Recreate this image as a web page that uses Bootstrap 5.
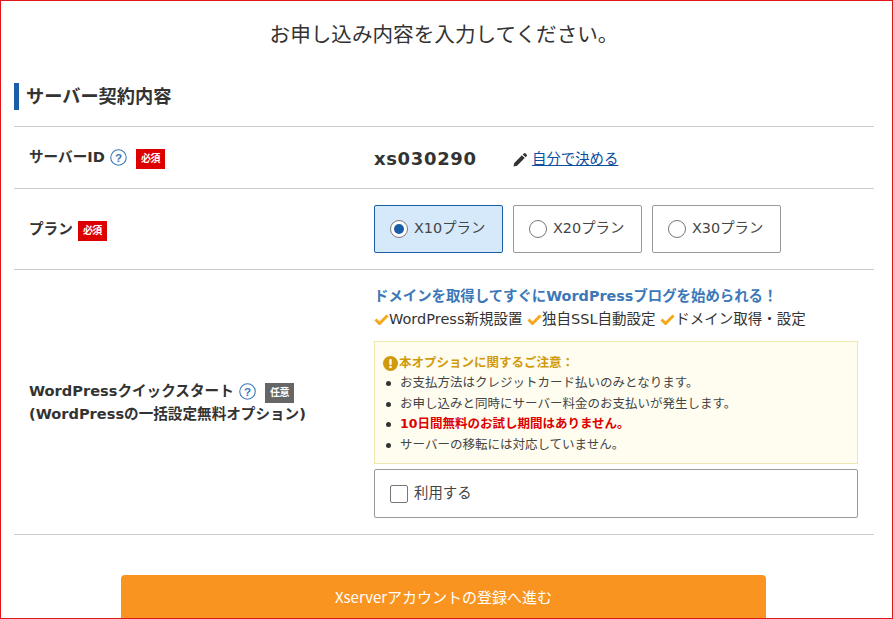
<!DOCTYPE html>
<html lang="ja">
<head>
<meta charset="utf-8">
<title>お申し込み内容</title>
<link href="https://cdn.jsdelivr.net/npm/bootstrap@5.3.0/dist/css/bootstrap.min.css" rel="stylesheet">
<style>
html,body{height:100%;overflow:hidden;margin:0}
body{font-family:"DejaVu Sans","Noto Sans CJK JP",sans-serif;color:#333;background:#fff}
.frame{height:619px;border:1px solid #e0161b;padding:0 18px 0 13px;overflow:hidden}
.lead-title{font-size:20.6px;line-height:30px;color:#333;text-align:center;margin:19px 0 0;font-weight:400}
.sec-title{font-size:18.2px;line-height:27px;font-weight:700;color:#333;border-left:5px solid #1a5ea8;padding-left:7px;margin:33px 0 16px}
.form-line{border-top:1px solid #ccc}
.form-line.end{border-bottom:1px solid #ccc}
.lbl{width:360px;padding-left:15px;font-size:14.6px;font-weight:700;color:#333;line-height:21px;flex-shrink:0}
.id-row{height:62px}
.plan-row{height:81px}
.wp-row{height:266px}
.id-val{font-size:18px;font-weight:700;letter-spacing:.65px;width:138px;padding-top:1px}
.pen-wrap{margin-top:5px}
.pen-link{font-size:14.4px;color:#0b4ea2;text-decoration:underline}
.tag{display:inline-block;width:29px;height:20px;line-height:20px;font-size:10px;font-weight:700;color:#fff;text-align:center;background:#dc0000;letter-spacing:-.5px}
.tag.opt{background:#666}
.qmark{width:17px;height:17px;vertical-align:-4px}
.opt-box{width:129px;height:48px;border:1px solid #999;border-radius:2px;font-size:14.4px;color:#444;padding-left:15px;background:#fff}
.opt-box.on{background:#d6e9fb;border-color:#1a5ea8}
.plan-set{gap:10px}
.opt-gap{gap:6px}
.fake-radio{width:18px;height:18px;border-radius:50%;border:1px solid #777;background:#fff;display:inline-flex;align-items:center;justify-content:center}
.fake-radio i{width:10px;height:10px;border-radius:50%;background:#1a5ea8;display:block}
.promo{font-size:14.4px;line-height:20px;font-weight:700;color:#3c78b8;margin-top:16px;white-space:nowrap}
.checks{font-size:14.5px;line-height:20px;color:#333;margin:3px 0 12px;white-space:nowrap}
.checks svg{width:15px;height:11px;margin-right:0;vertical-align:-1px}
.note{width:484px;height:123px;border:1px solid #f0e6b0;background:#fffdf0;padding:11px 8px;font-size:12.5px;line-height:20.4px;color:#444}
.note-head{font-weight:700;color:#d19a0c;display:flex;align-items:center;gap:1px}
.note-list{list-style:none;margin:0;padding:0}
.note-list li{padding-left:17px;position:relative}
.note-list li::before{content:"";position:absolute;left:3px;top:8px;width:5px;height:5px;border-radius:50%;background:#333}
.warn{color:#dc0000;font-weight:700}
.use-box{width:484px;height:49px;border:1px solid #999;border-radius:2px;margin-top:5px;padding-left:15px;font-size:14.4px;color:#444}
.fake-check{width:18px;height:18px;border:1px solid #777;border-radius:2px;background:#fff;display:inline-block}
.cta{width:645px;height:60px;background:#f99420;color:#fff;border:0;border-radius:4px 4px 0 0;font-family:"Noto Sans CJK JP",sans-serif;font-size:15px;line-height:44px;padding:0 0 16px;margin:40px 0 0 107px;display:block;text-align:center}
</style>
</head>
<body>
<div class="frame">
  <h1 class="lead-title">お申し込み内容を入力してください。</h1>
  <h2 class="sec-title">サーバー契約内容</h2>

  <div class="form-line id-row d-flex align-items-center">
    <div class="lbl">サーバーID
      <svg class="qmark" viewBox="0 0 16 16"><circle cx="8" cy="8" r="7.3" fill="none" stroke="#3c78b8"/><text x="8" y="12" text-anchor="middle" font-size="11" font-weight="700" fill="#3c78b8" font-family="Liberation Sans">?</text></svg>
      <span class="tag ms-1">必須</span>
    </div>
    <div class="id-val">xs030290</div>
    <div class="d-flex align-items-center gap-1 pen-wrap">
      <svg width="16" height="16" viewBox="0 0 16 16"><path fill="#333" d="M1.5 14.5l.8-3.6 7.6-7.6 2.8 2.8-7.6 7.6zM10.8 2.4l1.2-1.2a1 1 0 0 1 1.3 0l1.5 1.5a1 1 0 0 1 0 1.3l-1.2 1.2z"/></svg>
      <a class="pen-link" href="#">自分で決める</a>
    </div>
  </div>

  <div class="form-line plan-row d-flex align-items-center">
    <div class="lbl">プラン <span class="tag">必須</span></div>
    <div class="d-flex plan-set">
      <div class="opt-box on d-flex align-items-center opt-gap"><span class="fake-radio"><i></i></span>X10プラン</div>
      <div class="opt-box d-flex align-items-center opt-gap"><span class="fake-radio"></span>X20プラン</div>
      <div class="opt-box d-flex align-items-center opt-gap"><span class="fake-radio"></span>X30プラン</div>
    </div>
  </div>

  <div class="form-line end wp-row d-flex">
    <div class="lbl align-self-center">WordPressクイックスタート
      <svg class="qmark" viewBox="0 0 16 16"><circle cx="8" cy="8" r="7.3" fill="none" stroke="#3c78b8"/><text x="8" y="12" text-anchor="middle" font-size="11" font-weight="700" fill="#3c78b8" font-family="Liberation Sans">?</text></svg>
      <span class="tag opt ms-1">任意</span><br>(WordPressの一括設定無料オプション)
    </div>
    <div>
      <div class="promo">ドメインを取得してすぐにWordPressブログを始められる！</div>
      <div class="checks">
        <svg viewBox="0 0 15 11"><path d="M1.5 5.5l4 4 8-8" fill="none" stroke="#f5a81c" stroke-width="3"/></svg>WordPress新規設置
        <svg viewBox="0 0 15 11"><path d="M1.5 5.5l4 4 8-8" fill="none" stroke="#f5a81c" stroke-width="3"/></svg>独自SSL自動設定
        <svg viewBox="0 0 15 11"><path d="M1.5 5.5l4 4 8-8" fill="none" stroke="#f5a81c" stroke-width="3"/></svg>ドメイン取得・設定
      </div>
      <div class="note">
        <div class="note-head">
          <svg width="15" height="15" viewBox="0 0 15 15"><circle cx="7.5" cy="7.5" r="7.5" fill="#d19a0c"/><rect x="6.3" y="3" width="2.4" height="6" rx="1" fill="#fff"/><circle cx="7.5" cy="11" r="1.3" fill="#fff"/></svg>本オプションに関するご注意：
        </div>
        <ul class="note-list">
          <li>お支払方法はクレジットカード払いのみとなります。</li>
          <li>お申し込みと同時にサーバー料金のお支払いが発生します。</li>
          <li class="warn">10日間無料のお試し期間はありません。</li>
          <li>サーバーの移転には対応していません。</li>
        </ul>
      </div>
      <div class="use-box d-flex align-items-center opt-gap"><span class="fake-check"></span>利用する</div>
    </div>
  </div>

  <button class="cta" type="button">Xserverアカウントの登録へ進む</button>
</div>
<script src="https://cdn.jsdelivr.net/npm/bootstrap@5.3.0/dist/js/bootstrap.bundle.min.js"></script>
</body>
</html>
